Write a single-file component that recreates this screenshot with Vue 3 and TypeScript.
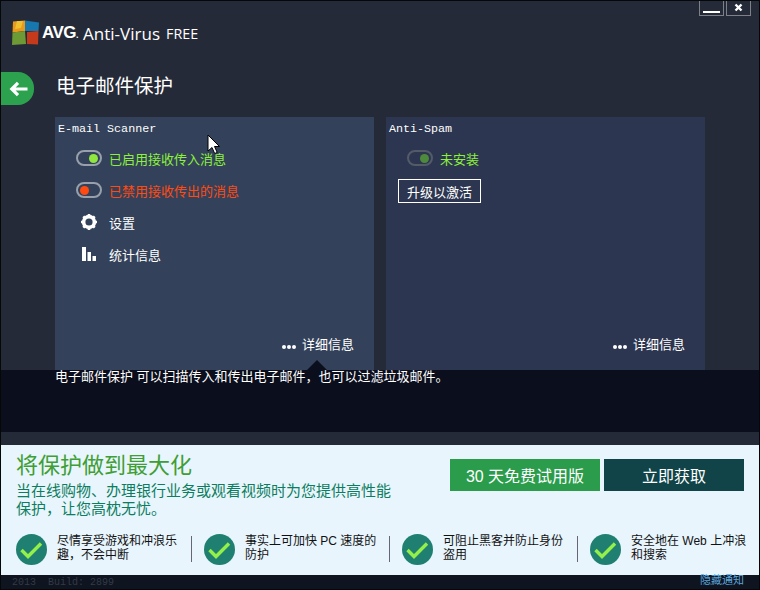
<template>
  <div class="app">
    <div class="win-buttons">
      <button class="win-btn"><span class="win-min"></span></button>
      <button class="win-btn win-btn--close">
        <svg width="9" height="9" viewBox="0 0 9 9"><path d="M1.5 1.5l6 6M7.5 1.5l-6 6" stroke="#fff" stroke-width="2.4" /></svg>
      </button>
    </div>

    <header class="logo-row">
      <svg class="logo" width="28" height="26" viewBox="0 0 28 26">
        <path d="M1 1.5 L13 0.5 L13 11 L0.5 12.5 Z" fill="#e99a1c" />
        <path d="M13 0.5 L27 2.5 L26.5 11 L13 11 Z" fill="#1678ae" />
        <path d="M0.5 12.5 L13 11 L14 24 L0 25 Z" fill="#6d9a35" />
        <path d="M15 12 L26.5 11 L26 24.5 L15 24 Z" fill="#c63a1c" />
        <path d="M5 1 L11 1 L9 8 L3 9 Z" fill="#f0c030" />
      </svg>
      <span class="logo-avg">AVG<span class="logo-dot">.</span></span>
      <span class="logo-name">Anti-Virus</span>
      <span class="logo-free">FREE</span>
    </header>

    <div class="title-row">
      <button class="back">
        <svg width="20" height="16" viewBox="0 0 20 16">
          <path d="M18.5 8H3M9 1.8 2.8 8 9 14.2" fill="none" stroke="#fff" stroke-width="3.2" />
        </svg>
      </button>
      <h1 class="page-title">电子邮件保护</h1>
    </div>

    <section class="cards">
      <div class="card card--active">
        <div class="card__title">E-mail Scanner</div>
        <ul class="rows">
          <li class="row">
            <span class="toggle"><i class="knob knob--on"></i></span>
            <span class="on">已启用接收传入消息</span>
          </li>
          <li class="row">
            <span class="toggle"><i class="knob knob--off"></i></span>
            <span class="off">已禁用接收传出的消息</span>
          </li>
          <li class="row">
            <span class="row__icon">
              <svg width="18" height="18" viewBox="0 0 18 18">
                <circle cx="9" cy="9" r="5.4" fill="none" stroke="#fff" stroke-width="3.6" />
                <path d="M9 1v3M9 14v3M1 9h3M14 9h3M3.3 3.3l2.2 2.2M12.5 12.5l2.2 2.2M14.7 3.3l-2.2 2.2M5.5 12.5l-2.2 2.2" stroke="#fff" stroke-width="2.6" />
              </svg>
            </span>
            <span>设置</span>
          </li>
          <li class="row">
            <span class="row__icon">
              <svg width="16" height="14" viewBox="0 0 16 14">
                <path d="M1 0h4v14H1zM6.5 5h3.5v9H6.500zM11.500 9h3.500v5h-3.500z" fill="#fff" />
              </svg>
            </span>
            <span>统计信息</span>
          </li>
        </ul>
        <a class="details"><i class="dots"></i>详细信息</a>
        <span class="pointer"></span>
      </div>

      <div class="card">
        <div class="card__title">Anti-Spam</div>
        <ul class="rows">
          <li class="row">
            <span class="toggle toggle--dim"><i class="knob knob--dim"></i></span>
            <span class="on">未安装</span>
          </li>
        </ul>
        <button class="upgrade">升级以激活</button>
        <a class="details"><i class="dots"></i>详细信息</a>
      </div>
    </section>

    <div class="desc">电子邮件保护 可以扫描传入和传出电子邮件，也可以过滤垃圾邮件。</div>

    <section class="promo">
      <div class="promo__top">
        <div class="promo__text">
          <h2 class="promo__title">将保护做到最大化</h2>
          <p class="promo__sub">当在线购物、办理银行业务或观看视频时为您提供高性能保护，让您高枕无忧。</p>
        </div>
        <div class="promo__actions">
          <button class="cta cta--trial">30 天免费试用版</button>
          <button class="cta cta--buy">立即获取</button>
        </div>
      </div>
      <div class="features">
        <div v-for="f in features" :key="f.text" class="feature">
          <svg class="check" width="31" height="31" viewBox="0 0 31 31">
            <circle cx="15.500" cy="15.500" r="15.500" fill="#1f7f70" />
            <path d="M5.500 16 12 22.500 25 9.500" fill="none" stroke="#93f04a" stroke-width="3.400" />
          </svg>
          <span class="feature__text">{{ f.text }}</span>
        </div>
      </div>
    </section>

    <footer class="footer">
      <span class="build">{{ buildInfo }}</span>
      <a class="hide-link">隐藏通知</a>
    </footer>

    <svg class="cursor" width="13" height="21" viewBox="0 0 13 21">
      <path d="M1 1v16l4-3.500 2.700 6 2.500-1.100-2.700-5.900h5z" fill="#fff" stroke="#000" />
    </svg>
  </div>
</template>

<script setup lang="ts">
interface Feature {
  text: string
}

const buildInfo = '2013  Build: 2899'

const features: Feature[] = [
  { text: '尽情享受游戏和冲浪乐趣，不会中断' },
  { text: '事实上可加快 PC 速度的防护' },
  { text: '可阻止黑客并防止身份盗用' },
  { text: '安全地在 Web 上冲浪和搜索' }
]
</script>

<style>
html,
body {
  margin: 0;
  background: #000;
}
</style>

<style scoped>
.app {
  position: relative;
  width: 760px;
  height: 590px;
  box-sizing: border-box;
  border: 1px solid #060708;
  background: #252a38;
  display: flex;
  flex-direction: column;
  overflow: hidden;
  color: #fff;
  font-family: "Liberation Sans", "Noto Sans CJK SC", sans-serif;
  font-size: 13px;
}

.win-buttons {
  position: absolute;
  top: -1px;
  right: 8px;
  display: flex;
  gap: 2px;
}

.win-btn {
  width: 25px;
  height: 16px;
  padding: 0;
  border: 1px solid #7d8087;
  border-top: 0;
  background: #252a38;
  display: flex;
  align-items: center;
  justify-content: center;
}

.win-min {
  width: 17px;
  height: 2px;
  margin-top: 8px;
  background: #fff;
}

.logo-row {
  height: 26px;
  padding: 19px 0 0 11px;
  display: flex;
  align-items: center;
}

.logo {
  flex: none;
}

.logo-avg {
  margin-left: 2px;
  font-size: 17px;
  font-weight: 700;
  letter-spacing: -0.5px;
}

.logo-dot {
  font-size: 9px;
}

.logo-name {
  margin-left: 5px;
  font-family: "Open Sans", sans-serif;
  font-size: 17px;
}

.logo-free {
  margin-left: 6px;
  font-family: "Open Sans", sans-serif;
  font-size: 14.300px;
}

.title-row {
  height: 45px;
  margin-top: 26px;
  display: flex;
  align-items: flex-start;
}

.back {
  width: 33px;
  height: 33px;
  padding: 0 0 0 2px;
  border: 0;
  border-radius: 0 16px 16px 0;
  background: #2ca24f;
  display: flex;
  align-items: center;
  justify-content: center;
}

.page-title {
  margin: 0 0 0 22px;
  font-size: 19.500px;
  font-weight: 400;
  line-height: 28px;
}

.cards {
  height: 253px;
  padding-left: 54px;
  display: flex;
  gap: 12px;
}

.card {
  position: relative;
  width: 319px;
  background: #2d3650;
}

.card--active {
  background: #33425a;
}

.card__title {
  padding: 5px 0 0 3px;
  font-family: "Liberation Mono", monospace;
  font-size: 11.700px;
  line-height: 14px;
}

.rows {
  list-style: none;
  margin: 6px 0 0;
  padding: 0 0 0 21px;
}

.row {
  height: 32px;
  display: flex;
  align-items: center;
  gap: 7px;
}

.row__icon {
  width: 26px;
  display: flex;
  justify-content: center;
}

.on {
  color: #8cf03c;
}

.off {
  color: #ff4a12;
}

.toggle {
  width: 18px;
  height: 12px;
  border: 2px solid #98a0ac;
  border-radius: 8px;
  display: flex;
  align-items: center;
  justify-content: flex-end;
  padding: 0 2px;
}

.toggle--dim {
  border-color: #545b68;
}

.knob {
  width: 9px;
  height: 9px;
  border-radius: 50%;
  display: block;
}

.knob--on {
  background: #8ee63f;
}

.knob--off {
  margin-right: auto;
  background: #ff4a12;
}

.knob--dim {
  background: #4e8a3c;
}

.upgrade {
  margin: 5px 0 0 12px;
  width: 83px;
  height: 24px;
  padding: 0;
  border: 1px solid #fff;
  background: transparent;
  color: #fff;
  font: inherit;
}

.details {
  position: absolute;
  right: 20px;
  bottom: 17px;
  display: flex;
  align-items: center;
  line-height: 16px;
}

.dots {
  display: block;
  width: 4px;
  height: 4px;
  margin: 3px 16px 0 0;
  border-radius: 50%;
  background: #fff;
  box-shadow: 5px 0 #fff, 10px 0 #fff;
}

.pointer {
  position: absolute;
  left: 252px;
  bottom: 0;
  border: 10px solid transparent;
  border-top: 0;
  border-bottom-color: #0b0e1d;
}

.desc {
  height: 62px;
  padding: 0 0 0 54px;
  margin-bottom: 13px;
  background: #0b0e1d;
  line-height: 13px;
}

.promo {
  height: 130px;
  background: #e8f5fd;
  color: #111;
  flex: none;
}

.promo__top {
  display: flex;
  justify-content: space-between;
}

.promo__text {
  width: 380px;
  padding: 7px 0 0 15px;
}

.promo__title {
  margin: 0;
  font-size: 22px;
  font-weight: 400;
  line-height: 27px;
  color: #3f9e34;
}

.promo__sub {
  margin: 3px 0 0;
  font-size: 15px;
  line-height: 18px;
  color: #0d7d5e;
}

.promo__actions {
  display: flex;
  gap: 4px;
  padding: 14px 15px 0 0;
}

.cta {
  height: 32px;
  padding: 0;
  border: 0;
  color: #fff;
  font: inherit;
  font-size: 16px;
}

.cta--trial {
  width: 150px;
  background: #2a9c4b;
}

.cta--buy {
  width: 140px;
  background: #104448;
}

.features {
  display: flex;
  padding: 16px 0 0 15px;
}

.feature {
  height: 31px;
  margin-right: 12px;
  display: flex;
  align-items: flex-start;
}

.feature::after {
  content: "";
  width: 1px;
  height: 26px;
  margin: 2px 0 0 3px;
  background: #667;
}

.feature:nth-child(2)::after {
  margin-left: 9px;
}

.feature:last-child::after {
  display: none;
}

.feature__text {
  width: 131px;
  margin-left: 10px;
  font-size: 12px;
  line-height: 14px;
}

.feature:nth-child(2) .feature__text {
  width: 135px;
}

.feature:last-child .feature__text {
  width: 120px;
}

.check {
  flex: none;
}

.footer {
  flex: 1;
  min-height: 0;
  display: flex;
  justify-content: space-between;
  align-items: center;
  padding: 0 15px 0 11px;
  background: #0e1420;
}

.build {
  font-family: "Liberation Mono", monospace;
  font-size: 10px;
  white-space: pre;
  color: #333a46;
}

.hide-link {
  align-self: flex-start;
  margin-top: -1px;
  color: #5ba6dc;
  font-size: 11px;
  line-height: 13px;
}

.cursor {
  position: absolute;
  left: 206px;
  top: 133px;
}
</style>
